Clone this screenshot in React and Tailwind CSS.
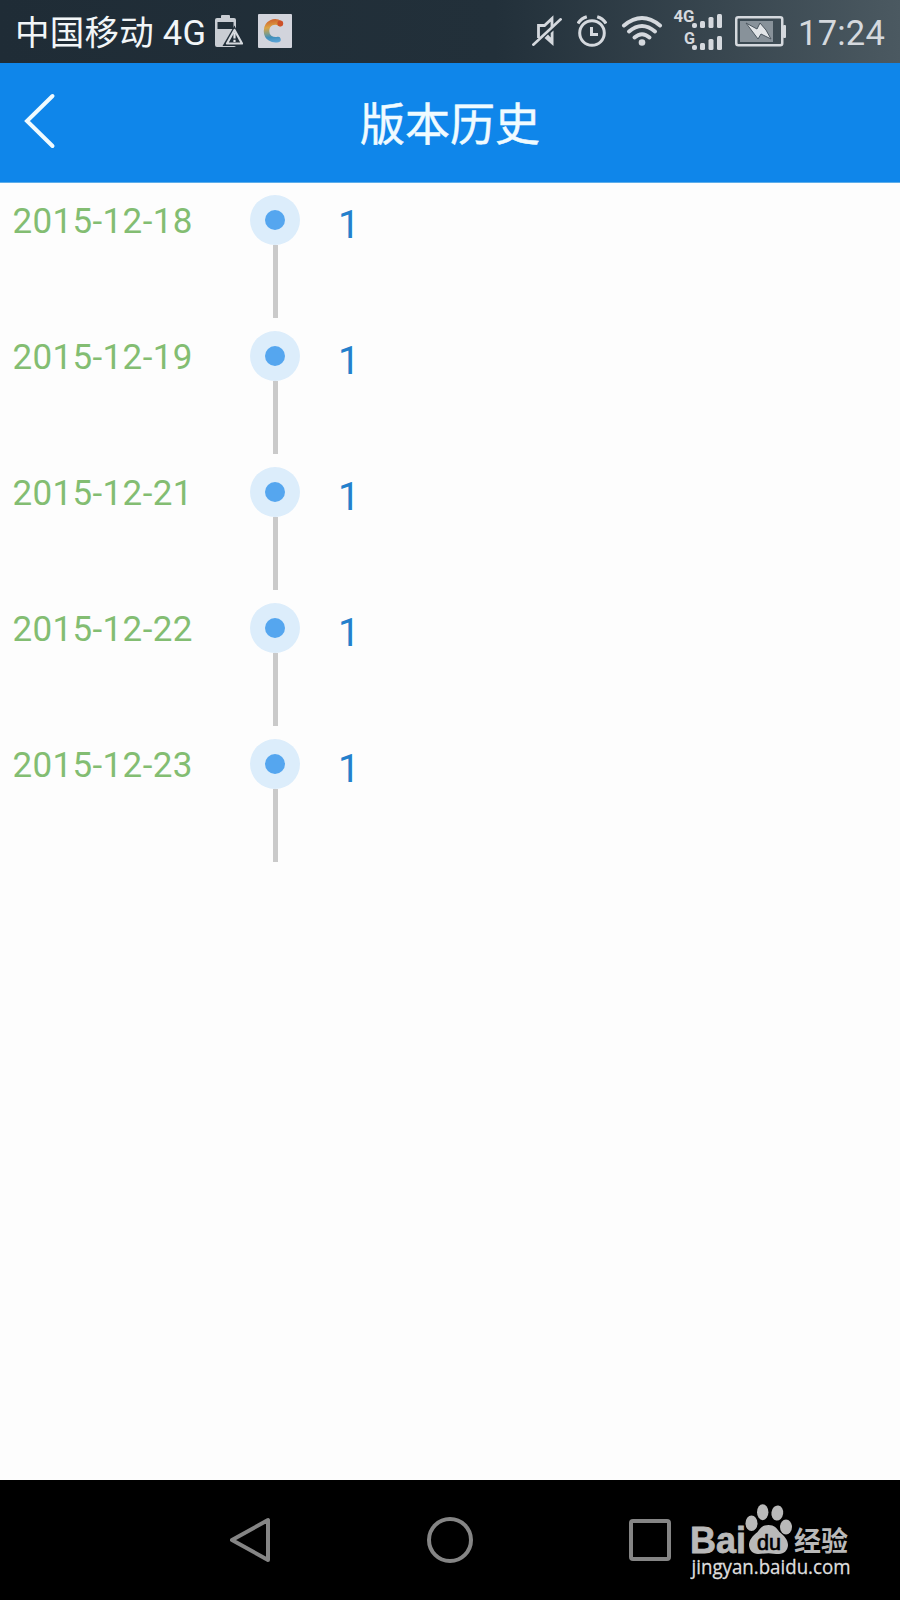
const HISTORY = [
  { date: '2015-12-18', version: '1' },
  { date: '2015-12-19', version: '1' },
  { date: '2015-12-21', version: '1' },
  { date: '2015-12-22', version: '1' },
  { date: '2015-12-23', version: '1' },
]

function BatteryWarning() {
  return (
    <svg width="28" height="33" viewBox="0 0 28 33" className="shrink-0">
      <path d="M2 3h4V1q0-1 1-1h7q1 0 1 1v2h4q2 0 2 2v25q0 2-2 2H2q-2 0-2-2V5q0-2 2-2z" fill="#c9cdd3" />
      <path d="M2.500 7h16v7h-16z" fill="#222f39" />
      <path d="M19.500 10.500 7.500 31H29z" fill="#222f39" />
      <path d="M19.500 15 12 28.500h15z" fill="#222f39" stroke="#d5d9de" strokeWidth="2.200" strokeLinejoin="round" />
      <path d="M19.500 17.500v6M19.500 24.800v2.200" stroke="#e2e5e9" strokeWidth="2.200" />
    </svg>
  )
}

function AppBadge() {
  return (
    <svg width="34" height="34" viewBox="0 0 34 34" className="shrink-0">
      <defs>
        <linearGradient id="ring" gradientUnits="userSpaceOnUse" x1="14" y1="5" x2="17" y2="28">
          <stop offset="0" stopColor="#cf5f2b" />
          <stop offset="0.35" stopColor="#dba445" />
          <stop offset="0.58" stopColor="#8a9d80" />
          <stop offset="0.78" stopColor="#3f8fbb" />
          <stop offset="1" stopColor="#5ba3d6" />
        </linearGradient>
      </defs>
      <rect width="34" height="34" rx="1" fill="#d2d4dc" />
      <path d="M22 9.500C17 6 8.500 8.500 8.500 17c0 7 6 9.500 11.500 8.500" fill="none" stroke="url(#ring)" strokeWidth="5.500" strokeLinecap="round" />
      <circle cx="22.300" cy="9.500" r="2.900" fill="#cc5029" />
    </svg>
  )
}

function Muted() {
  return (
    <svg width="30" height="34" viewBox="0 0 30 34" fill="none" stroke="#d5d9de" strokeWidth="2.800" className="shrink-0">
      <path d="M6.500 24V11.500h6l7.500-7V13" />
      <path d="m1.300 30.700 27.400-25.400" strokeWidth="2.600" strokeLinecap="round" />
      <path d="M21.500 16.500v15.500l-9-8 3.500-3.500 2.700 3V19z" fill="#d5d9de" stroke="none" />
    </svg>
  )
}

function Alarm() {
  return (
    <svg width="30" height="32" viewBox="0 0 30 32" fill="none" stroke="#d5d9de" className="shrink-0">
      <circle cx="15" cy="18" r="12.300" strokeWidth="3" />
      <path d="M14.500 12v7.500h6.500" strokeWidth="3" />
      <path d="M1 8.500Q4 3.500 9.800 1.800M29 8.500Q26 3.500 20.200 1.800" strokeWidth="3.200" />
    </svg>
  )
}

function Wifi() {
  return (
    <svg width="42" height="32" viewBox="0 0 42 32" fill="none" stroke="#d5d9de" strokeWidth="4" strokeLinecap="round" className="shrink-0">
      <path d="M3 10.500q18-15 36 0" />
      <path d="M8 16.500q13-11 26 0" />
      <path d="M13.500 22.500q7.500-6.500 15 0" />
      <circle cx="21" cy="27.500" r="3.300" fill="#d5d9de" stroke="none" />
    </svg>
  )
}

function DualSignal() {
  return (
    <svg width="50" height="54" viewBox="0 -4 50 54" fill="#d5d9de" className="shrink-0">
      <text x="0.500" y="14" fontSize="17" fontWeight="700" fontFamily="Roboto, sans-serif" textLength="21" lengthAdjust="spacingAndGlyphs">4G</text>
      <text x="11" y="35.500" fontSize="17" fontWeight="700" fontFamily="Roboto, sans-serif" textLength="11" lengthAdjust="spacingAndGlyphs">G</text>
      {[0, 22].map(y => (
        <g key={y}>
          <rect x="19" y={y + 15} width="5" height="5" rx="2" />
          <rect x="27" y={y + 13} width="5" height="7" rx="1.500" />
          <rect x="35.500" y={y + 9} width="5" height="11" rx="1.500" />
          <rect x="44" y={y + 6} width="5" height="14" rx="1.500" />
        </g>
      ))}
    </svg>
  )
}

function Battery() {
  return (
    <svg width="51" height="31" viewBox="0 0 51 31" className="shrink-0">
      <rect x="1.250" y="1.250" width="46" height="28" rx="2" fill="none" stroke="#d5d9de" strokeWidth="2.500" />
      <rect x="48" y="9" width="3" height="13" rx="1" fill="#d5d9de" />
      <rect x="5" y="5" width="33" height="21" fill="#88929a" />
      <path d="m11 7 11 6 3-6 6 7 5 9-10-5-3 5-6-8z" fill="#e2e5e8" stroke="#4b565f" strokeWidth="1" />
    </svg>
  )
}

function Watermark() {
  return (
    <svg width="164" height="80" viewBox="0 0 164 80" className="absolute left-[690px] top-[23px]" fill="#b9b9b9">
      <text x="0" y="50" fontSize="36" fontWeight="700" fontFamily="'Liberation Sans', sans-serif" stroke="#b9b9b9" strokeWidth="0.800" textLength="56" lengthAdjust="spacingAndGlyphs">Bai</text>
      <ellipse cx="61.500" cy="20.300" rx="6" ry="7.700" />
      <ellipse cx="72.700" cy="9.200" rx="5.700" ry="8" />
      <ellipse cx="87.300" cy="10" rx="5.900" ry="7.600" transform="rotate(8 87.300 10)" />
      <ellipse cx="96" cy="24" rx="6" ry="7.500" />
      <path d="M78.500 22c6 0 8 3 11 7 5 4 8.500 8 8.500 13s-4 9-9 9c-4 0-7-.8-10.500-.8S72 51 68 51c-5 0-9-4-9-9s3.500-9 8.500-13c3-4 5-7 11-7z" />
      <text x="67" y="46.500" fontSize="22" fontFamily="'Liberation Sans', sans-serif" fill="#000" stroke="#000" strokeWidth="0.700" textLength="24" lengthAdjust="spacingAndGlyphs">du</text>
      <text x="104" y="47.500" fontSize="27" fontWeight="700" fontFamily="'Noto Sans CJK SC', sans-serif" textLength="54" lengthAdjust="spacingAndGlyphs">经验</text>
      <text x="1.500" y="71" fontSize="19.500" fontFamily="'Open Sans', sans-serif" fill="#dedede" stroke="#dedede" strokeWidth="0.300" textLength="159" lengthAdjust="spacingAndGlyphs">jingyan.baidu.com</text>
    </svg>
  )
}

function StatusBar() {
  return (
    <div className="flex h-[62.500px] shrink-0 items-center justify-between bg-linear-to-r from-[#1f2c36] via-[#22303a] via-55% to-[#4b5961] pl-[15px] pr-[15px]">
      <div className="flex items-center">
        <span className="pt-[3px] text-[34.500px] leading-none tracking-[0.250px] text-[#f2f6f8]">中国移动 4G</span>
        <span className="ml-[9px]"><BatteryWarning /></span>
        <span className="ml-[15px]"><AppBadge /></span>
      </div>
      <div className="flex items-center">
        <Muted />
        <span className="ml-[15px]"><Alarm /></span>
        <span className="ml-[14px]"><Wifi /></span>
        <span className="ml-[10px]"><DualSignal /></span>
        <span className="ml-[12px]"><Battery /></span>
        <span className="ml-[12px] pt-[3px] text-[34.500px] leading-none tracking-[0.200px] text-[#d5d9de]">17:24</span>
      </div>
    </div>
  )
}

function Header() {
  return (
    <header className="grid h-[120px] shrink-0 grid-cols-[1fr_auto_1fr] items-center border-b border-[#5eaeea] bg-[#0f86ea] px-6">
      <svg width="32" height="58" viewBox="0 0 32 58" fill="none" stroke="#f0fbff" strokeWidth="4" strokeLinecap="round">
        <path d="M28.500 3 3 28l25.500 25" />
      </svg>
      <h1 className="pt-[7px] text-[45px] leading-none text-[#f0fbff] [-webkit-text-stroke:0.500px]">版本历史</h1>
    </header>
  )
}

function HistoryRow({ date, version }) {
  return (
    <li className="flex h-[136px] items-start pt-3">
      <span className="w-[250px] pl-[12.500px] pt-[9px] text-[35px] leading-none tracking-[0.350px] text-[#83bd72]">{date}</span>
      <div className="flex h-full w-[50px] flex-col items-center">
        <span className="flex size-[50px] shrink-0 items-center justify-center rounded-full bg-[#dcedfb]">
          <span className="size-5 rounded-full bg-[#55a6ef]" />
        </span>
        <span className="mb-px w-[5px] flex-1 bg-[#cacaca]" />
      </div>
      <span className="pl-[38px] pt-[11px] text-[39px] leading-none text-[#2480cc]">{version}</span>
    </li>
  )
}

function NavBar() {
  return (
    <nav className="relative flex h-[120px] shrink-0 items-center bg-black pl-[230px] text-[#858585]">
      <svg width="40" height="46" viewBox="0 0 40 46" fill="none" stroke="currentColor" strokeWidth="4" strokeLinejoin="round">
        <path d="M2 23 38 3v40z" />
      </svg>
      <span className="ml-[157px] size-[46px] rounded-full border-4 border-current" />
      <span className="ml-[156px] size-[42px] rounded-[4px] border-4 border-current" />
      <Watermark />
    </nav>
  )
}

export default function App() {
  return (
    <div className="flex h-[1600px] w-[900px] flex-col overflow-hidden bg-[#fdfdfd] font-['Roboto','Noto_Sans_CJK_SC',sans-serif]">
      <StatusBar />
      <Header />
      <ul className="flex-1">
        {HISTORY.map(item => (
          <HistoryRow key={item.date} {...item} />
        ))}
      </ul>
      <NavBar />
    </div>
  )
}
